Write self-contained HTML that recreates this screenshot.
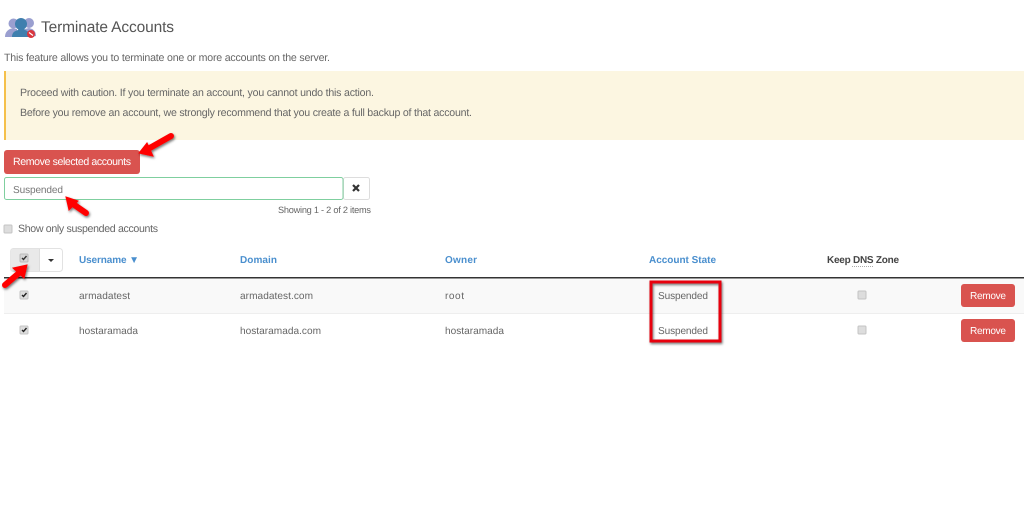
<!DOCTYPE html>
<html><head><meta charset="utf-8"><style>
html,body{margin:0;padding:0;background:#fff;width:1024px;height:515px;overflow:hidden}
svg{display:block;filter:blur(.3px)}
text{font-family:"Liberation Sans",sans-serif;font-size:10.6px;fill:#666;white-space:pre;text-rendering:geometricPrecision}
.h{font-weight:bold;fill:#4a8fce;font-size:10px}
.t{font-size:10.1px}
</style></head><body>
<svg width="1024" height="515" viewBox="0 0 1024 515" xmlns="http://www.w3.org/2000/svg">
<defs><filter id="s" x="-30%" y="-30%" width="170%" height="170%"><feDropShadow dx="1" dy="1.5" stdDeviation="1.2" flood-color="#000" flood-opacity=".55"/></filter></defs>
<rect width="1024" height="515" fill="#fff"/>
<!-- header icon -->
<g fill="#9a9fd0"><circle cx="13.500" cy="23.500" r="5"/><path d="M5 37c0-5 3-7 5-8l3-1 4 1v8z"/><circle cx="29" cy="23" r="5"/><path d="M25 37v-8l4-1 3 1c2 1 4 3 4 7l-4 1z"/></g>
<circle cx="21" cy="24" r="6" fill="#3f7fae"/><path d="M12 37c0-5 3-6 6-7l1-2h5l1 2c3 1 5 3 5 7z" fill="#3f7fae"/>
<circle cx="31" cy="34" r="4" fill="#d9363e"/><path d="M29 32.500l4 3" stroke="#fff" stroke-width="1.200"/>
<text x="41" y="32" style="font-size:15.500px;fill:#555" textLength="133" lengthAdjust="spacing">Terminate Accounts</text>
<text x="4" y="61" textLength="326" lengthAdjust="spacing">This feature allows you to terminate one or more accounts on the server.</text>
<!-- alert -->
<rect x="4" y="71" width="1020" height="69" fill="#fcf6e1"/><rect x="4" y="71" width="2" height="69" fill="#f5c04a"/>
<text x="20" y="96" textLength="354" lengthAdjust="spacing">Proceed with caution. If you terminate an account, you cannot undo this action.</text>
<text x="20" y="116" textLength="452" lengthAdjust="spacing">Before you remove an account, we strongly recommend that you create a full backup of that account.</text>
<!-- remove selected -->
<rect x="4" y="150" width="136" height="24" rx="3" fill="#d9534f"/>
<text x="13" y="165" style="fill:#fff" textLength="118" lengthAdjust="spacing">Remove selected accounts</text>
<!-- search -->
<rect x="343.500" y="177.500" width="26" height="22" rx="2" fill="#fff" stroke="#ddd"/>
<rect x="4.500" y="177.500" width="338.500" height="22" rx="2" fill="#fff" stroke="#7fcf9f"/>
<text class="t" x="13" y="193" style="fill:#777" textLength="50" lengthAdjust="spacing">Suspended</text>
<path d="M353 185l6 6m0-6l-6 6" stroke="#333" stroke-width="2.200" fill="none"/>
<text x="278" y="213" style="font-size:9.200px" textLength="93" lengthAdjust="spacing">Showing 1 - 2 of 2 items</text>
<!-- show only -->
<rect x="4" y="225" width="8" height="8" rx="1" fill="#ddd" stroke="#c4c4c4"/>
<text x="18" y="232" textLength="140" lengthAdjust="spacing">Show only suspended accounts</text>
<!-- select toolbar -->
<rect x="10.500" y="248.500" width="52" height="23" rx="3" fill="#fff" stroke="#e2e2e2"/>
<path d="M13 249h27v22H13a2.500 2.500 0 0 1-2.500-2.500v-17A2.500 2.500 0 0 1 13 249z" fill="#e9e9e9"/><path d="M39.500 249v22" stroke="#ddd"/>
<rect x="20" y="254" width="8" height="8" rx="1" fill="#d6d6d6" stroke="#bbb"/><path d="M22 258l1.500 1.500 3-3.500" stroke="#333" stroke-width="1.400" fill="none"/>
<path d="M48 259h6l-3 3z" fill="#333"/>
<!-- table header -->
<text class="h" x="79" y="263" textLength="60" lengthAdjust="spacing">Username ▼</text>
<text class="h" x="240" y="263" textLength="37" lengthAdjust="spacing">Domain</text>
<text class="h" x="445" y="263" textLength="32" lengthAdjust="spacing">Owner</text>
<text class="h" x="649" y="263" textLength="67" lengthAdjust="spacing">Account State</text>
<text class="h" x="827" y="263" style="fill:#444" textLength="72" lengthAdjust="spacing">Keep DNS Zone</text>
<path d="M852 266.500h21" stroke="#aaa" stroke-dasharray="1 1"/>
<rect x="4" y="277" width="1020" height="1.500" fill="#333"/>
<rect x="4" y="278.500" width="1020" height="34.500" fill="#f9f9f9"/>
<rect x="4" y="313" width="1020" height="1" fill="#eee"/>
<!-- rows -->
<g>
<rect x="20" y="291" width="8" height="8" rx="1" fill="#ddd" stroke="#c4c4c4"/><path d="M22 295l1.500 1.500 3-3.500" stroke="#222" stroke-width="1.400" fill="none"/>
<text class="t" x="79" y="299" textLength="51" lengthAdjust="spacing">armadatest</text>
<text class="t" x="240" y="299" textLength="73" lengthAdjust="spacing">armadatest.com</text>
<text class="t" x="445" y="299" textLength="19" lengthAdjust="spacing">root</text>
<text class="t" x="658" y="299" textLength="50" lengthAdjust="spacing">Suspended</text>
<rect x="858" y="291" width="8" height="8" rx="1" fill="#ddd" stroke="#c4c4c4"/>
<rect x="961" y="284" width="54" height="23" rx="3" fill="#d9534f"/>
<text class="t" x="970" y="299" style="fill:#fff" textLength="36" lengthAdjust="spacing">Remove</text>
</g>
<g>
<rect x="20" y="326" width="8" height="8" rx="1" fill="#ddd" stroke="#c4c4c4"/><path d="M22 330l1.500 1.500 3-3.500" stroke="#222" stroke-width="1.400" fill="none"/>
<text class="t" x="79" y="334" textLength="59" lengthAdjust="spacing">hostaramada</text>
<text class="t" x="240" y="334" textLength="81" lengthAdjust="spacing">hostaramada.com</text>
<text class="t" x="445" y="334" textLength="59" lengthAdjust="spacing">hostaramada</text>
<text class="t" x="658" y="334" textLength="50" lengthAdjust="spacing">Suspended</text>
<rect x="858" y="326" width="8" height="8" rx="1" fill="#ddd" stroke="#c4c4c4"/>
<rect x="961" y="319" width="54" height="23" rx="3" fill="#d9534f"/>
<text class="t" x="970" y="334" style="fill:#fff" textLength="36" lengthAdjust="spacing">Remove</text>
</g>
<!-- annotations -->
<g filter="url(#s)">
<rect x="651" y="282" width="69" height="59" fill="none" stroke="#e8000b" stroke-width="3"/>
<g fill="#f00" stroke="#f00" stroke-linecap="round">
<path d="M148 149L171 136" stroke-width="6"/>
<path d="M139 153L147 143L153 156z" stroke-width="1"/>
<path d="M73 204L86 213" stroke-width="6"/>
<path d="M66 197L78 201L69 210z" stroke-width="1"/>
<path d="M19 273L5 285" stroke-width="6"/>
<path d="M27 265L13 268L24 278z" stroke-width="1"/>
</g>
</g>
</svg>
</body></html>
